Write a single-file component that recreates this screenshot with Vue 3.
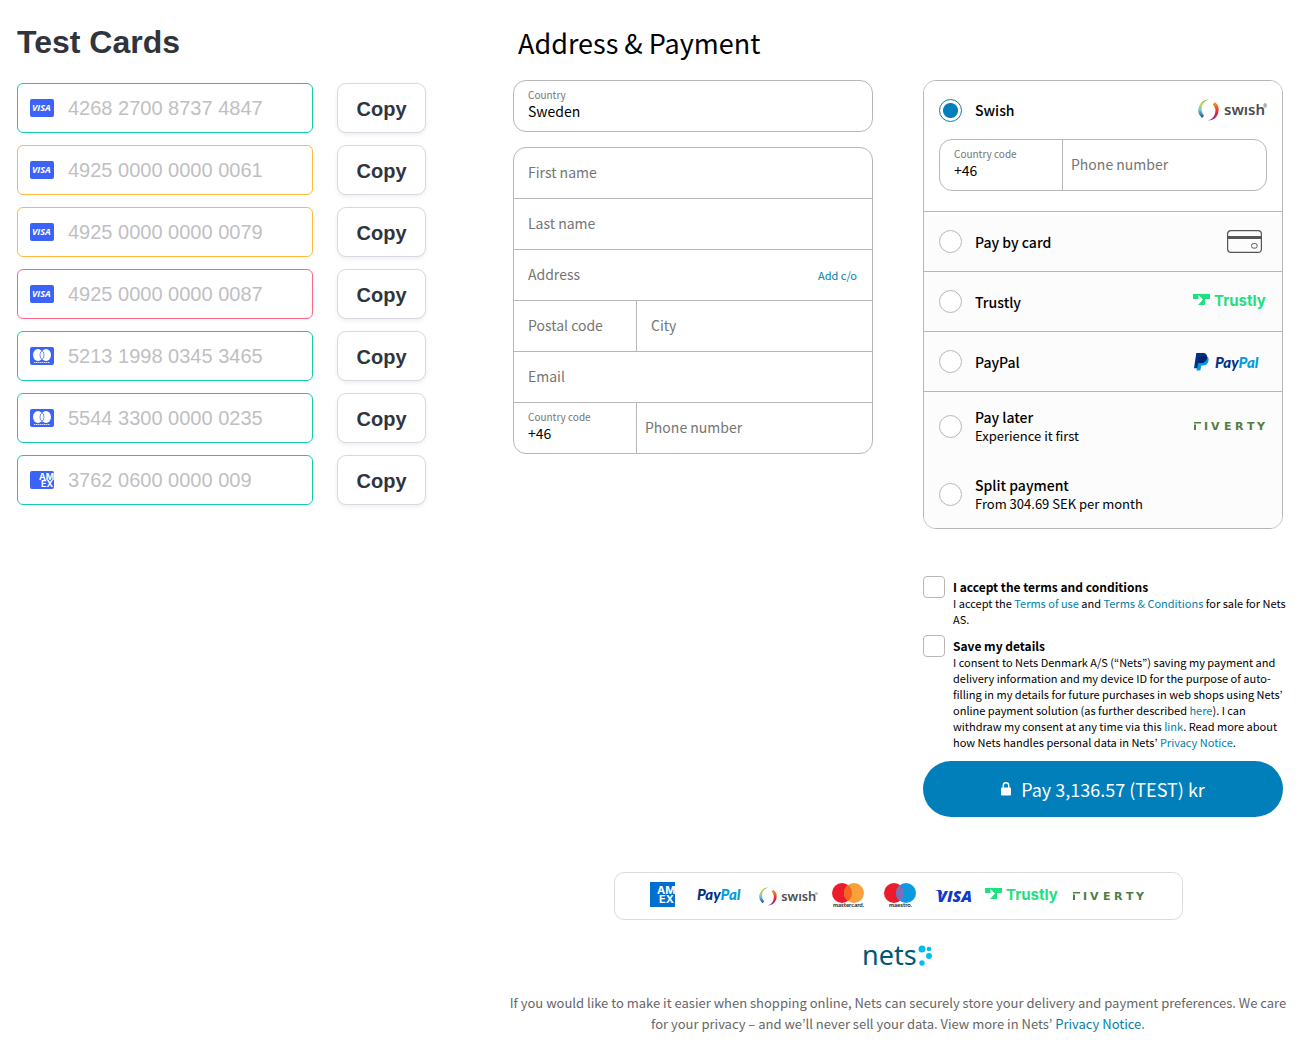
<script setup>
import { ref } from 'vue'

const testCards = [
  { brand: 'visa', number: '4268 2700 8737 4847', tone: 'ok' },
  { brand: 'visa', number: '4925 0000 0000 0061', tone: 'warn' },
  { brand: 'visa', number: '4925 0000 0000 0079', tone: 'warn' },
  { brand: 'visa', number: '4925 0000 0000 0087', tone: 'fail' },
  { brand: 'mastercard', number: '5213 1998 0345 3465', tone: 'ok' },
  { brand: 'mastercard', number: '5544 3300 0000 0235', tone: 'ok' },
  { brand: 'amex', number: '3762 0600 0000 009', tone: 'ok' },
]

const methods = [
  { id: 'swish', title: 'Swish', logo: 'swish' },
  { id: 'card', title: 'Pay by card', logo: 'card' },
  { id: 'trustly', title: 'Trustly', logo: 'trustly' },
  { id: 'paypal', title: 'PayPal', logo: 'paypal' },
  { id: 'later', title: 'Pay later', note: 'Experience it first', logo: 'riverty' },
  { id: 'split', title: 'Split payment', note: 'From 304.69 SEK per month' },
]
const method = ref('swish')
const acceptTerms = ref(false)
const saveDetails = ref(false)

const paypalWord = (x, y) =>
  `<text x="${x}" y="${y}" font-family="Lato, sans-serif" font-weight="900" font-style="italic" font-size="15"><tspan fill="#003087">Pay</tspan><tspan fill="#009cde">Pal</tspan></text>`

const trustly = '<path d="M0 1H17V6H12V12H5L10 6.500L5.500 2V6H0Z" fill="#1ee07f"/><text x="21" y="13" font-family="Inter, sans-serif" font-weight="700" font-size="15" fill="#1ee07f">Trustly</text>'
const riverty = '<path d="M0 9V3.500H2V9ZM0 2.500V1H7V2.500Z" fill="#4f7d43"/><text x="10 17 30 41 53 63" y="9" font-family="DejaVu Sans, sans-serif" font-weight="700" font-size="11" fill="#4f7d43">IVERTY</text>'
const swish = `<defs>
  <linearGradient id="swish-cool" x1="0" y1="0" x2="0" y2="1"><stop offset="0" stop-color="#7fb23f"/><stop offset=".25" stop-color="#c9d84a"/><stop offset=".55" stop-color="#74c7de"/><stop offset="1" stop-color="#1d4f9e"/></linearGradient>
  <linearGradient id="swish-warm" x1="0" y1="0" x2="0" y2="1"><stop offset="0" stop-color="#f7a823"/><stop offset=".3" stop-color="#ee5a2b"/><stop offset=".6" stop-color="#e0203f"/><stop offset="1" stop-color="#7b2f90"/></linearGradient>
  </defs>
  <path d="M11 .6A10.400 10.400 0 0 0 4 18.900L6.200 16.800A9 9.600 0 0 1 11 .6Z" fill="url(#swish-cool)"/>
  <path d="M10 21.400A10.400 10.400 0 0 0 17 3.100L14.800 5.200A9 9.600 0 0 1 10 21.400Z" fill="url(#swish-warm)"/>
  <text x="26" y="16" font-family="Noto Sans, sans-serif" font-weight="600" font-size="15" fill="#4c4c4e">swısh</text>
  <text x="65" y="9" font-family="Noto Sans, sans-serif" font-size="5" fill="#4c4c4e">®</text>`

const logos = {
  swish: { w: 69, h: 22, box: '0 0 69 22', label: 'Swish', art: swish },
  swishSmall: { w: 59, h: 19, box: '0 0 69 22', label: 'Swish', art: swish },
  card: {
    w: 40, h: 24, box: '0 0 40 24', label: 'Card',
    art: '<rect x=".6" y=".6" width="33.800" height="21.800" rx="3.500" fill="none" stroke="#555" stroke-width="1.200"/><path d="M0 6H35V9H0Z" fill="#555"/><rect x="24.600" y="13.600" width="5.500" height="4.500" rx="1.800" fill="none" stroke="#555"/>',
  },
  trustly: { w: 74, h: 18, box: '0 0 74 18', label: 'Trustly', art: trustly },
  paypal: {
    w: 74, h: 20, box: '0 0 74 20', label: 'PayPal',
    art: `<path d="M5.600 4H13C15.500 4.500 16 6.500 15.400 9C14.700 12.500 12.500 13.600 9.500 13.600H8.300L7.300 18.500H3.500Z" fill="#009cde"/>
      <path d="M3.300 1H9.500C13.200 1 14.600 3 14 6C13.200 9.800 10.600 11 7.200 11H5.300L4.200 16.300H1Z" fill="#003087"/>
      <path d="M6.300 5.200C6.400 4.500 6.800 4.200 7.400 4.200H12.200C12.900 4.200 13.500 4.300 14.100 4.500L14 6C13.200 9.800 10.600 11 7.200 11H5.200Z" fill="#012169"/>${paypalWord(22, 16)}`,
  },
  paypalWord: { w: 48, h: 20, box: '0 0 48 20', label: 'PayPal', art: paypalWord(0, 14) },
  riverty: { w: 73, h: 10, box: '0 0 73 10', label: 'Riverty', art: riverty },
  amex: {
    w: 36, h: 26, box: '-3 1 36 26', label: 'American Express',
    art: '<rect width="25" height="25" fill="#016fd0"/><svg width="25" height="26"><g font-family="Inter, sans-serif" font-weight="700" font-size="11" fill="#fff"><text x="7" y="12">AM</text><text x="9" y="21">EX</text></g></svg>',
  },
  mastercard: {
    w: 38, h: 28, box: '0 0 38 28', label: 'Mastercard',
    art: '<circle cx="10" cy="11" r="10" fill="#eb1b2d"/><circle cx="22" cy="11" r="10" fill="#f8a03b"/><path d="M16 3A10 10 0 0 1 16 19A10 10 0 0 1 16 3Z" fill="#f4661f"/><text x="1" y="25" font-family="Lato, sans-serif" font-weight="700" font-size="6" fill="#222">mastercard.</text>',
  },
  maestro: {
    w: 37, h: 28, box: '0 0 37 28', label: 'Maestro',
    art: '<circle cx="10" cy="11" r="10" fill="#eb1b2d"/><circle cx="22" cy="11" r="10" fill="#0b9ade"/><path d="M16 3A10 10 0 0 1 16 19A10 10 0 0 1 16 3Z" fill="#7a70b8"/><text x="5" y="25" font-family="Lato, sans-serif" font-weight="700" font-size="6" fill="#222">maestro.</text>',
  },
  visa: {
    w: 36, h: 18, box: '0 0 36 18', label: 'Visa',
    art: '<path d="M0 3H6L8 9C6 6 4 4 0 3Z" fill="#0b3ccc"/><text x="2" y="15" font-family="Open Sans, sans-serif" font-weight="800" font-style="italic" font-size="16" fill="#0b3ccc">VISA</text>',
  },
}
const accepted = ['amex', 'paypalWord', 'swishSmall', 'mastercard', 'maestro', 'visa', 'trustly', 'riverty']

const copy = (number) => navigator.clipboard?.writeText(number)
</script>

<template>
  <div class="page">
    <section class="cards">
      <h1>Test Cards</h1>
      <ul>
        <li v-for="card in testCards" :key="card.number">
          <label class="card" :class="card.tone">
            <svg width="24" height="18" viewBox="0 0 24 18" role="img" :aria-label="card.brand">
              <rect width="24" height="18" rx="2" fill="#3b63f7" />
              <text v-if="card.brand === 'visa'" x="2" y="12" font-family="Open Sans, sans-serif" font-weight="700" font-style="italic" font-size="9" fill="#fff">VISA</text>
              <template v-else-if="card.brand === 'mastercard'">
                <ellipse cx="8" cy="8" rx="5" ry="6" fill="#fff" />
                <ellipse cx="16" cy="8" rx="5" ry="6" fill="#fff" />
                <ellipse cx="12" cy="8" rx="2" ry="4" fill="#fff" stroke="#3b63f7" stroke-width=".7" />
                <path d="M4 15.500H20" stroke="#fff" stroke-dasharray="1.500 .5" opacity=".8" />
              </template>
              <g v-else font-family="Inter, sans-serif" font-weight="700" font-size="9" fill="#fff">
                <text x="9" y="9">AM</text>
                <text x="11" y="16">EX</text>
              </g>
            </svg>
            <input type="text" :value="card.number" :aria-label="card.brand + ' test card number'" readonly />
          </label>
          <button type="button" @click="copy(card.number)">Copy</button>
        </li>
      </ul>
    </section>

    <main class="checkout">
      <h2>Address &amp; Payment</h2>
      <div class="columns">
        <form class="address" @submit.prevent>
          <div class="group">
            <div class="field filled">
              <label for="country">Country</label>
              <select id="country"><option>Sweden</option></select>
            </div>
          </div>
          <div class="group">
            <div class="field"><label for="first">First name</label><input id="first" type="text" /></div>
            <div class="field"><label for="last">Last name</label><input id="last" type="text" /></div>
            <div class="field">
              <label for="street">Address</label><input id="street" type="text" />
              <a href="#co">Add c/o</a>
            </div>
            <div class="pair">
              <div class="field"><label for="postal">Postal code</label><input id="postal" type="text" /></div>
              <div class="field"><label for="city">City</label><input id="city" type="text" /></div>
            </div>
            <div class="field"><label for="email">Email</label><input id="email" type="email" /></div>
            <div class="pair">
              <div class="field filled"><label for="dial">Country code</label><input id="dial" type="text" value="+46" /></div>
              <div class="field phone"><label for="phone">Phone number</label><input id="phone" type="tel" /></div>
            </div>
          </div>
        </form>

        <form class="payment" @submit.prevent>
          <div class="methods">
            <div v-for="m in methods" :key="m.id" class="method" :class="{ active: method === m.id, tall: m.note, joined: m.id === 'split' }">
              <label class="choice">
                <input v-model="method" type="radio" name="method" :value="m.id" />
                <span class="names">
                  <span class="name">{{ m.title }}</span>
                  <span v-if="m.note" class="note">{{ m.note }}</span>
                </span>
                <svg v-if="m.logo" :width="logos[m.logo].w" :height="logos[m.logo].h" :viewBox="logos[m.logo].box" role="img" :aria-label="logos[m.logo].label" v-html="logos[m.logo].art"></svg>
              </label>
              <div v-if="m.id === 'swish' && method === 'swish'" class="group">
                <div class="pair">
                  <div class="field filled"><label for="swish-dial">Country code</label><input id="swish-dial" type="text" value="+46" /></div>
                  <div class="field phone"><label for="swish-phone">Phone number</label><input id="swish-phone" type="tel" /></div>
                </div>
              </div>
            </div>
          </div>

          <div class="consents">
            <div class="consent">
              <input id="terms" v-model="acceptTerms" type="checkbox" />
              <div>
                <label for="terms">I accept the terms and conditions</label>
                <p>I accept the <a href="#terms-of-use">Terms of use</a> and <a href="#conditions">Terms &amp; Conditions</a> for sale for Nets AS.</p>
              </div>
            </div>
            <div class="consent">
              <input id="save" v-model="saveDetails" type="checkbox" />
              <div>
                <label for="save">Save my details</label>
                <p>I consent to Nets Denmark A/S (“Nets”) saving my payment and delivery information and my device ID for the purpose of auto-filling in my details for future purchases in web shops using Nets’ online payment solution (as further described <a href="#here">here</a>). I can withdraw my consent at any time via this <a href="#link">link</a>. Read more about how Nets handles personal data in Nets’ <a href="#privacy">Privacy Notice</a>.</p>
              </div>
            </div>
          </div>

          <button class="pay" type="submit">
            <svg width="10" height="14" viewBox="0 0 10 14" aria-hidden="true">
              <rect y="5.500" width="10" height="8" rx="1" fill="#fff" />
              <path d="M2.300 6V3.500A2.700 2.700 0 0 1 7.700 3.500V6" fill="none" stroke="#fff" stroke-width="1.400" />
            </svg>
            Pay 3,136.57 (TEST) kr
          </button>
        </form>
      </div>

      <footer>
        <div class="accepted">
          <svg v-for="name in accepted" :key="name" :width="logos[name].w" :height="logos[name].h" :viewBox="logos[name].box" role="img" :aria-label="logos[name].label" v-html="logos[name].art"></svg>
        </div>
        <svg class="nets" width="70" height="24" viewBox="0 0 70 24" role="img" aria-label="Nets">
          <text x="-1" y="21" font-family="Noto Sans, sans-serif" font-size="27" fill="#005776">nets</text>
          <g fill="#00beef">
            <circle cx="59" cy="5" r="3.500" /><circle cx="66" cy="5" r="2.300" />
            <circle cx="66" cy="12" r="3" /><circle cx="59" cy="19" r="2.700" />
          </g>
        </svg>
        <p>If you would like to make it easier when shopping online, Nets can securely store your delivery and payment preferences. We care for your privacy – and we’ll never sell your data. View more in Nets’ <a href="#privacy">Privacy Notice</a>.</p>
      </footer>
    </main>
  </div>
</template>

<style>
body {
  margin: 0;
  background: #fff;
}
</style>

<style scoped>
.page {
  display: grid;
  grid-template-columns: minmax(0, 409fr) minmax(0, 770fr);
  column-gap: 87px;
  padding: 24px 25px 24px 17px;
  font-family: "Noto Sans CJK KR", "Noto Sans", sans-serif;
  font-size: 14px;
  line-height: 20px;
  color: #000;
}
.page *,
.page *::before {
  box-sizing: border-box;
}
h1,
h2,
p,
ul {
  margin: 0;
  padding: 0;
}
a {
  color: #007fa8;
  text-decoration: none;
}
svg {
  display: block;
  flex: none;
  overflow: visible;
}
input,
select,
button {
  font: inherit;
  color: inherit;
}
input,
select {
  margin: 0;
  padding: 0;
  border: 0;
  background: none;
  appearance: none;
  min-width: 0;
  width: 100%;
}

.cards,
.cards button,
.cards input {
  font-family: "Liberation Sans", Arial, sans-serif;
}
.cards h1 {
  font-size: 32px;
  line-height: 36px;
  margin-bottom: 23px;
  color: #2f343d;
}
.cards ul {
  display: flex;
  flex-direction: column;
  gap: 12px;
  list-style: none;
}
.cards li {
  display: grid;
  grid-template-columns: 1fr 89px;
  gap: 24px;
  height: 50px;
}
.card {
  display: flex;
  align-items: center;
  gap: 14px;
  padding: 0 12px;
  border: 1px solid;
  border-radius: 6px;
}
.card.ok {
  border-color: #12ccb0;
}
.card.warn {
  border-color: #ffb93b;
}
.card.fail {
  border-color: #ff6482;
}
.card input {
  font-size: 20px;
  line-height: 24px;
  color: #bfbfc3;
}
.cards button {
  border: 1px solid #d8d8e0;
  border-radius: 9px;
  background: #fff;
  box-shadow: 0 2px 4px rgba(0, 0, 0, 0.07);
  padding: 2px 0 0;
  font-size: 20px;
  font-weight: 700;
  color: #2f343d;
}

.checkout h2 {
  padding-left: 5px;
  font-size: 27px;
  line-height: 38px;
  font-weight: 400;
  margin-bottom: 18px;
}
.columns {
  display: grid;
  grid-template-columns: 1fr 1fr;
  gap: 50px;
  align-items: start;
}
.address {
  display: flex;
  flex-direction: column;
  gap: 15px;
}
.group {
  border: 1px solid #b7b7b7;
  border-radius: 13px;
  background: #fff;
}
.group > * + * {
  border-top: 1px solid #b7b7b7;
}
.pair {
  display: grid;
  grid-template-columns: 123px 1fr;
}
.pair > :first-child {
  border-right: 1px solid #b7b7b7;
}
.field {
  display: grid;
  grid-template-columns: 1fr auto;
  align-items: center;
  height: 50px;
  padding: 0 15px 2px 14px;
  color: #757575;
}
.group > .field + .field,
.group > .pair + .field {
  height: 51px;
}
.field label {
  grid-area: 1 / 1;
  pointer-events: none;
}
.field input {
  grid-area: 1 / 1;
  height: 48px;
  color: #000;
}
.field a {
  font-size: 11px;
  padding-top: 2px;
}
.field.phone {
  padding-left: 8px;
}
.field.filled {
  display: flex;
  flex-direction: column;
  align-items: stretch;
  padding-top: 7px;
}
.filled label {
  font-size: 10px;
  line-height: 13px;
}
.filled input,
.filled select {
  height: 20px;
  color: #000;
}

.methods {
  border: 1px solid #b7b7b7;
  border-radius: 13px;
  overflow: hidden;
}
.method {
  padding: 0 15px;
  background: #fcfcfc;
}
.method + .method {
  border-top: 1px solid #b7b7b7;
}
.method.joined {
  border-top: 0;
}
.method.active {
  padding-bottom: 20px;
  background: #fff;
}
.choice {
  display: flex;
  align-items: center;
  height: 59px;
}
.active .choice {
  height: 58px;
}
.tall .choice {
  height: 68px;
}
.choice input {
  flex: none;
  width: 23px;
  height: 23px;
  border: 1px solid #b7b7b7;
  border-radius: 50%;
  background: #fff;
}
.choice input:checked {
  border-color: #007fba;
  background: radial-gradient(circle, #007fba 7px, #fff 8px);
}
.names {
  flex: 1;
  display: flex;
  flex-direction: column;
  padding-left: 13px;
}
.name {
  font-weight: 500;
}
.note {
  font-size: 13px;
  line-height: 18px;
}

.consents {
  display: flex;
  flex-direction: column;
  gap: 8px;
  margin: 47px -6px 11px 0;
  font-size: 11px;
  line-height: 16px;
}
.consent {
  display: flex;
  gap: 8px;
}
.consent input {
  flex: none;
  width: 22px;
  height: 22px;
  border: 1px solid #b7b7b7;
  border-radius: 4px;
  background: #fff;
}
.consent input:checked {
  background: #007fba;
}
.consent div {
  padding-top: 3px;
}
.consent label {
  display: block;
  font-size: 12px;
  font-weight: 700;
}
.pay {
  display: flex;
  align-items: center;
  justify-content: center;
  gap: 10px;
  width: 100%;
  height: 56px;
  border: 0;
  border-radius: 28px;
  background: #007fba;
  color: #fff;
  font-size: 18px;
}

footer {
  display: flex;
  flex-direction: column;
  align-items: center;
  margin: 55px -6px 0;
}
.accepted {
  display: flex;
  align-items: center;
  gap: 14px;
  height: 48px;
  padding: 0 36px 0 32px;
  border: 1px solid #dcdcdc;
  border-radius: 10px;
}
.nets {
  margin: 24px 0;
}
footer p {
  font-size: 13px;
  line-height: 21px;
  text-align: center;
  color: #666;
}
</style>
